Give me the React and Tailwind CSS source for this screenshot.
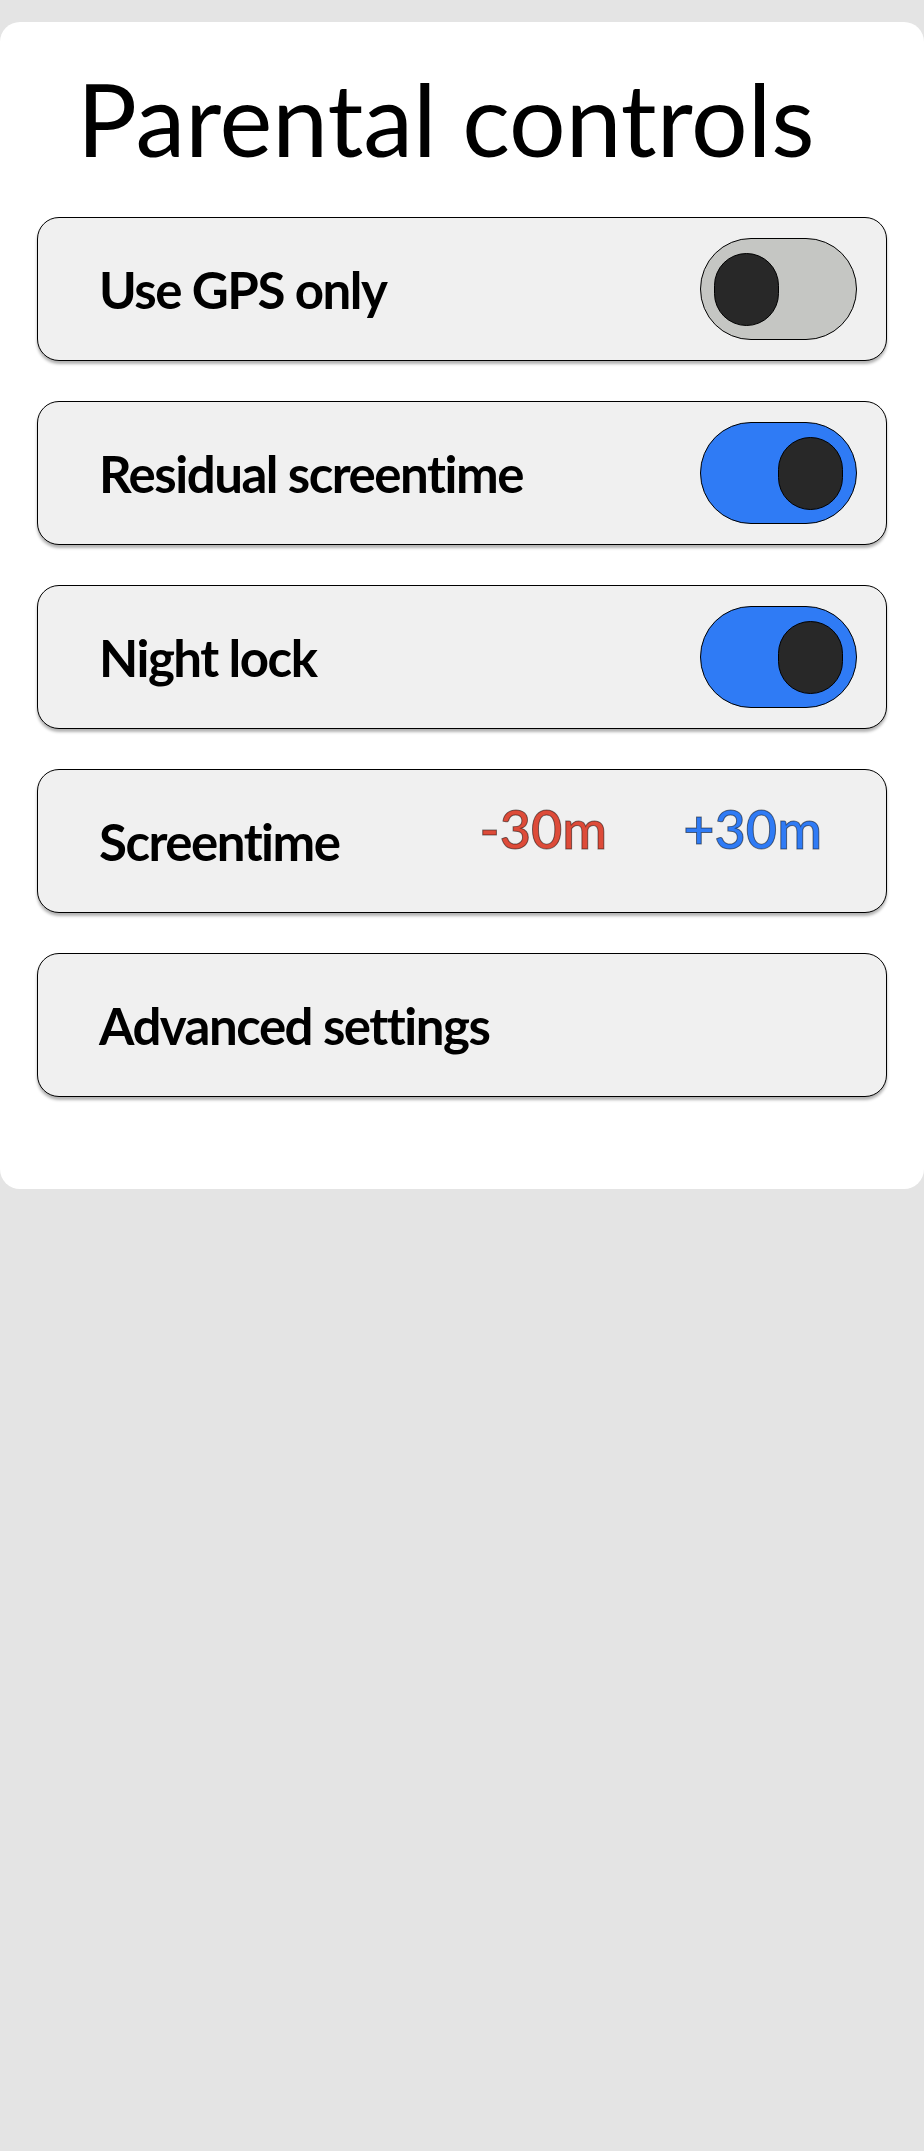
import React, { useState } from 'react';

// --- Small pieces ---

const Toggle = ({ on, onChange }) => (
  <button
    onClick={onChange}
    className={`flex h-[102px] w-[157px] shrink-0 items-center rounded-full border border-black px-[13px] ${
      on ? 'justify-end bg-[#2f7bf5]' : 'justify-start bg-[#c5c6c3]'
    }`}
  >
    <span className="block h-[73px] w-[65px] rounded-full border border-black bg-[#282828]" />
  </button>
);

const Row = ({ children }) => (
  <div className="flex h-[144px] items-center rounded-[22px] border border-black bg-[#f0f0f0] pl-[61px] pr-[29px] shadow-[0_3px_3px_rgba(0,0,0,0.3)]">
    {children}
  </div>
);

const Label = ({ children }) => (
  <span className="flex-1 text-[51px] leading-none font-bold tracking-[-1.5px] text-black">{children}</span>
);

// --- Main ---

export default function App() {
  const [gpsOnly, setGpsOnly] = useState(false);
  const [residual, setResidual] = useState(true);
  const [nightLock, setNightLock] = useState(true);

  return (
    <div className="min-h-screen bg-[#e4e4e4] pt-[22px] font-['Lato','Open_Sans',sans-serif]">
      <div className="rounded-[20px] bg-white px-[37px] pt-[46px] pb-[92px]">
        <h1 className="ml-[40px] text-[100px] leading-none font-normal tracking-normal text-black">Parental controls</h1>

        <div className="mt-[49px] flex flex-col gap-[40px]">
          <Row>
            <Label>Use GPS only</Label>
            <Toggle on={gpsOnly} onChange={() => setGpsOnly(!gpsOnly)} />
          </Row>
          <Row>
            <Label>Residual screentime</Label>
            <Toggle on={residual} onChange={() => setResidual(!residual)} />
          </Row>
          <Row>
            <Label>Night lock</Label>
            <Toggle on={nightLock} onChange={() => setNightLock(!nightLock)} />
          </Row>
          <Row>
            <Label>Screentime</Label>
            <div className="mr-[35px] flex gap-[76px] pb-6 text-[54px] leading-none font-semibold [-webkit-text-stroke:1px_rgba(0,0,0,0.5)]">
              <span className="cursor-pointer text-[#dd4b39]">-30m</span>
              <span className="cursor-pointer text-[#2f7bf5]">+30m</span>
            </div>
          </Row>
          <Row>
            <Label>Advanced settings</Label>
          </Row>
        </div>
      </div>
    </div>
  );
}
